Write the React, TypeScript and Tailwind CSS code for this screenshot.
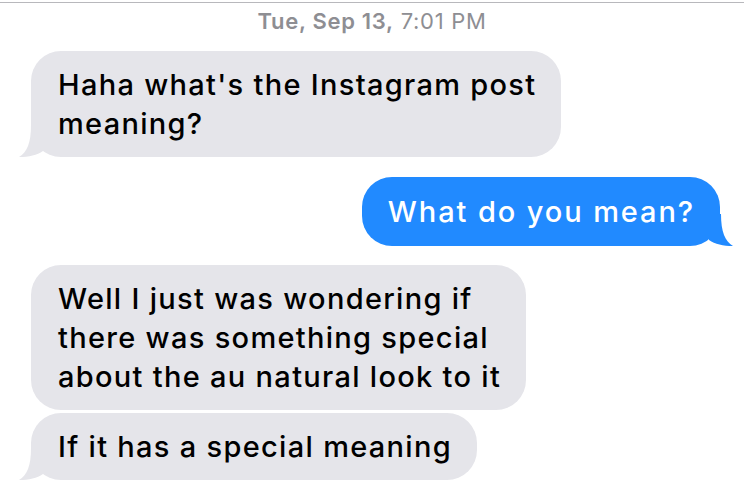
import React from 'react'

const font = { fontFamily: 'Inter, "Noto Sans", "Liberation Sans", sans-serif' }

function TailLeft() {
  return (
    <svg className="absolute left-[-12px] bottom-0" width="24" height="32" viewBox="0 0 24 32">
      <path d="M12,0 C12,18 8,27 0,32 C10,32 18,30 24,26 L24,0 Z" fill="#e5e5ea" />
    </svg>
  )
}

function TailRight() {
  return (
    <svg className="absolute right-[-13px] bottom-0" width="25" height="32" viewBox="0 0 25 32">
      <path d="M13,0 C13,18 17,27 25,32 C15,32 7,30 1,26 L1,0 Z" fill="#218aff" />
    </svg>
  )
}

function Received({ lines, tail }: { lines: string[]; tail?: boolean }) {
  return (
    <div className="relative self-start ml-[31px] bg-[#e5e5ea] rounded-[30px] pl-[27px] pr-[25px] py-[14px] text-black text-[29px] font-medium tracking-[1.3px] leading-[39px] whitespace-nowrap">
      {lines.map((l, i) => (
        <div key={i}>{l}</div>
      ))}
      {tail && <TailLeft />}
    </div>
  )
}

function Sent({ text }: { text: string }) {
  return (
    <div className="relative self-end mr-[24px] bg-[#218aff] rounded-[30px] pl-[26px] pr-[25px] py-[15px] text-white text-[29px] font-medium tracking-[1.9px] leading-[39px] whitespace-nowrap">
      {text}
      <TailRight />
    </div>
  )
}

export default function App() {
  return (
    <div className="w-[744px] h-[499px] bg-white overflow-hidden" style={font}>
      <div className="mt-[2px] h-[1px] bg-[#b8b8bc]" />
      <div className="flex flex-col">
        <div className="text-center text-[#8e8e93] text-[22px] tracking-[0.7px] leading-[28px] mt-[4px]">
          <span className="font-semibold">Tue, Sep 13,</span> 7:01 PM
        </div>
        <div className="flex flex-col mt-[16px]">
          <Received lines={["Haha what's the Instagram post", 'meaning?']} tail />
          <div className="mt-[20px] flex flex-col">
            <Sent text="What do you mean?" />
          </div>
          <div className="mt-[19px] flex flex-col gap-[3px]">
            <Received lines={['Well I just was wondering if', 'there was something special', 'about the au natural look to it']} />
            <Received lines={['If it has a special meaning']} tail />
          </div>
        </div>
      </div>
    </div>
  )
}
